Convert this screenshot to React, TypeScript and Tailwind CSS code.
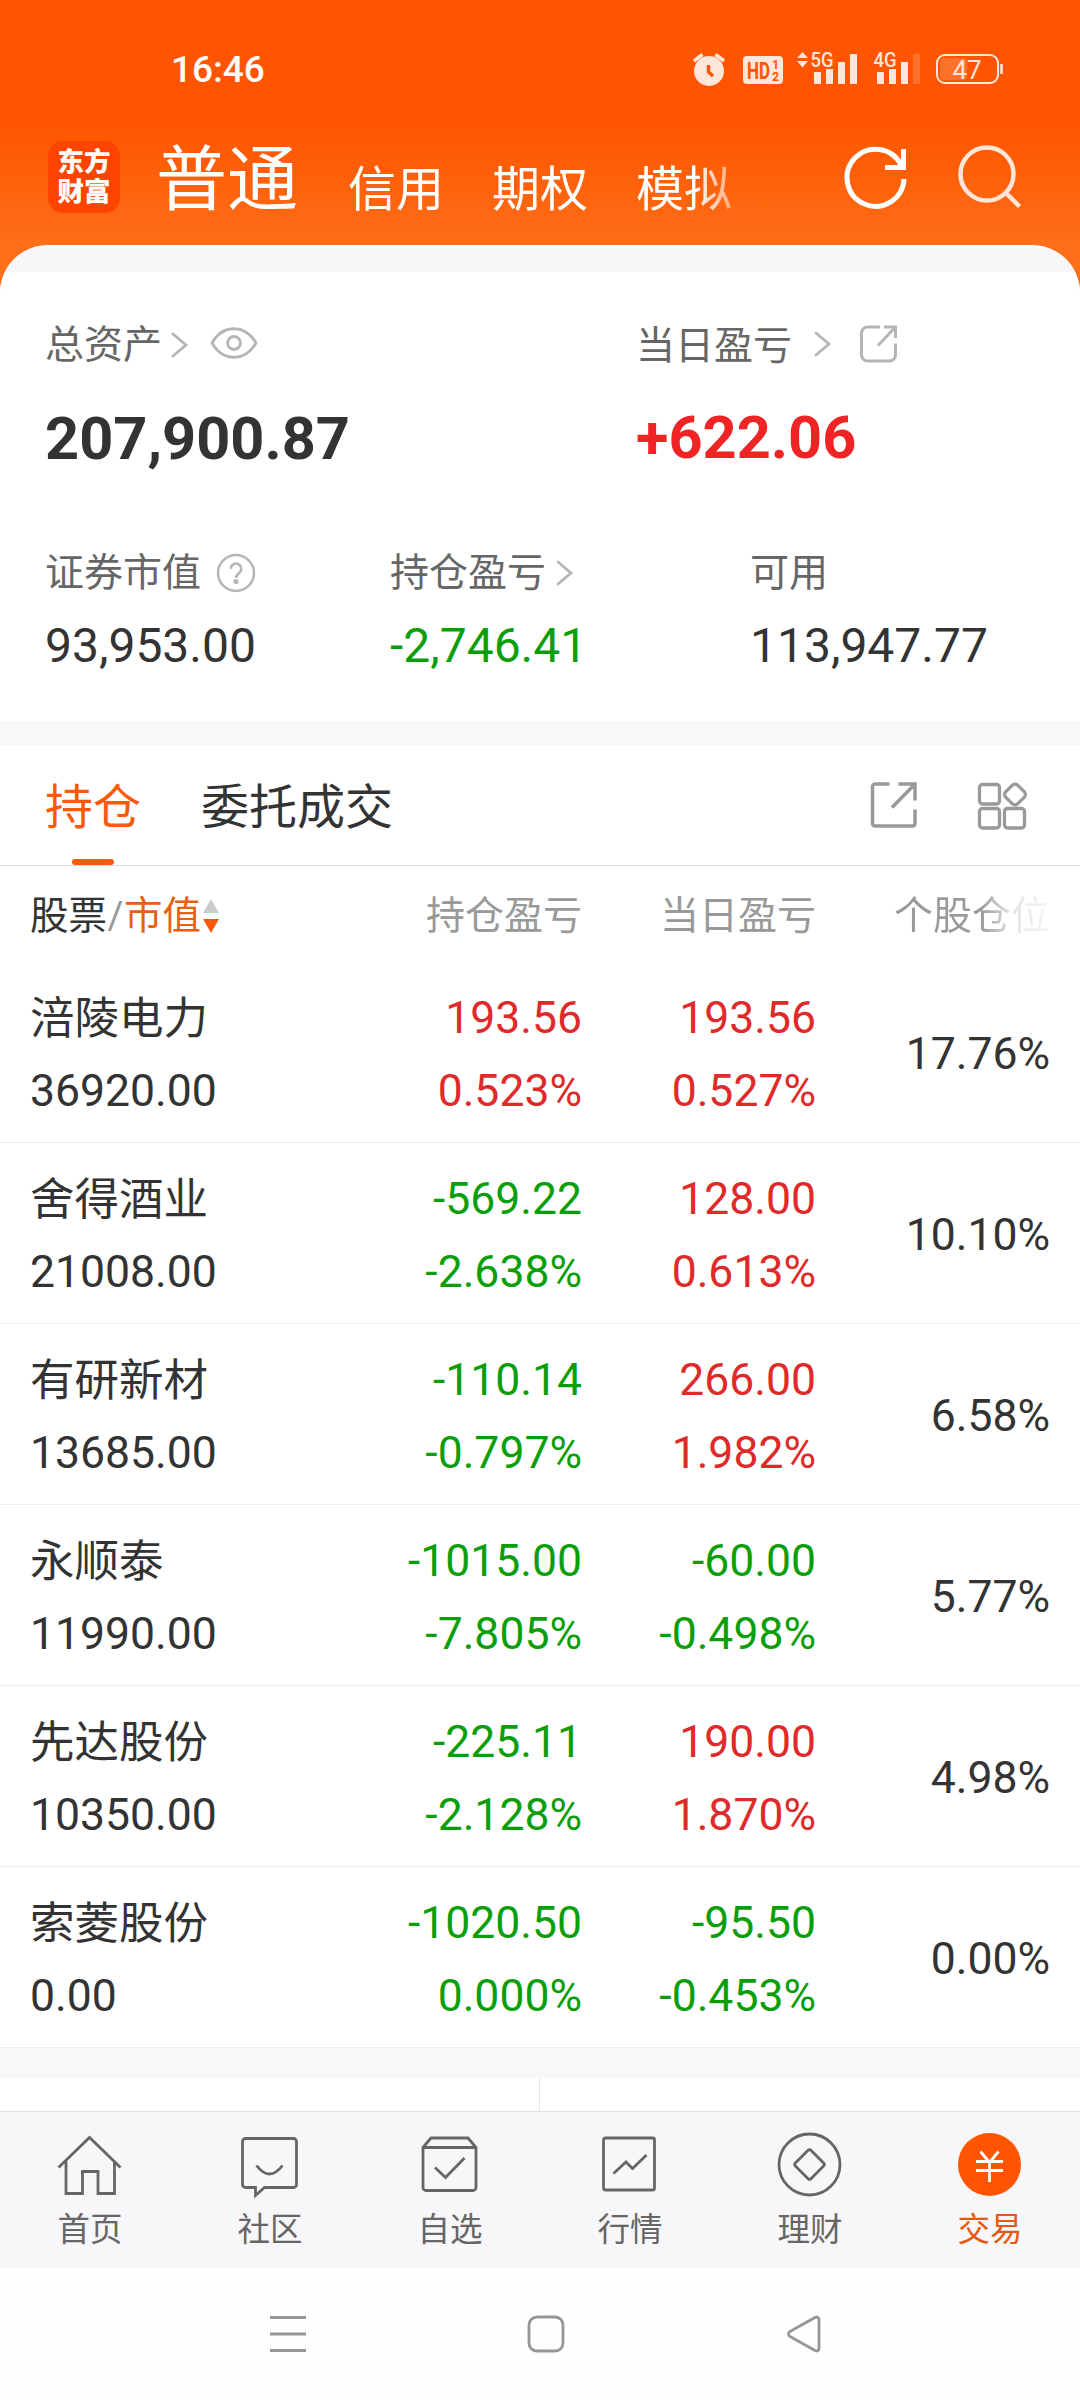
import React from 'react';

interface Holding {
  name: string;
  value: string;
  profit: string;
  profitRate: string;
  today: string;
  todayRate: string;
  position: string;
}

const holdings: Holding[] = [
  { name: '涪陵电力', value: '36920.00', profit: '193.56', profitRate: '0.523%', today: '193.56', todayRate: '0.527%', position: '17.76%' },
  { name: '舍得酒业', value: '21008.00', profit: '-569.22', profitRate: '-2.638%', today: '128.00', todayRate: '0.613%', position: '10.10%' },
  { name: '有研新材', value: '13685.00', profit: '-110.14', profitRate: '-0.797%', today: '266.00', todayRate: '1.982%', position: '6.58%' },
  { name: '永顺泰', value: '11990.00', profit: '-1015.00', profitRate: '-7.805%', today: '-60.00', todayRate: '-0.498%', position: '5.77%' },
  { name: '先达股份', value: '10350.00', profit: '-225.11', profitRate: '-2.128%', today: '190.00', todayRate: '1.870%', position: '4.98%' },
  { name: '索菱股份', value: '0.00', profit: '-1020.50', profitRate: '0.000%', today: '-95.50', todayRate: '-0.453%', position: '0.00%' },
];

const toneOf = (amount: string) => (amount.startsWith('-') ? 'text-[#0a9f0a]' : 'text-[#e02a2a]');

const Chevron = () => (
  <svg width="18" height="26" viewBox="0 0 18 26" fill="none" stroke="#b5b5b5" strokeWidth="2.8" strokeLinecap="round">
    <path d="M2 2l13 11L2 24" />
  </svg>
);

const StatusBar = () => (
  <div className="flex h-[126px] items-start">
    <div className="ml-[171px] mt-[48px] w-[522px] text-[37px] font-medium leading-[44px]">16:46</div>
    <div className="mt-[50px] flex text-[#ffe6da]">
      <svg width="34" height="38" viewBox="693 50 34 38">
        <circle cx="709" cy="71" r="15" fill="currentColor" />
        <path d="M694 61l8.500-6.500M724 61l-8.500-6.500" stroke="currentColor" strokeWidth="3.500" />
        <path d="M708.500 65v7l4.500 4" stroke="#ff5500" strokeWidth="3.500" fill="none" />
      </svg>
      <svg className="-mt-2 ml-4" width="40" height="46" viewBox="743 42 40 46" fill="#ff5500" fontWeight="700">
        <rect x="743" y="56" width="40" height="28" rx="4" fill="currentColor" />
        <text x="747" y="78.500" fontSize="23" textLength="23" lengthAdjust="spacingAndGlyphs">HD</text>
        <text x="772" y="69" fontSize="12.500">1</text>
        <text x="772" y="80.500" fontSize="12.500">2</text>
      </svg>
      <svg className="-mt-2 ml-[14px]" width="62" height="46" viewBox="797 42 62 46" fill="currentColor">
        <path d="M797 58l5.500-6 5.500 6zM797 61l5.500 6.500 5.500-6.500z" />
        <text x="810.500" y="67" fontSize="21" fontWeight="500" textLength="23" lengthAdjust="spacingAndGlyphs">5G</text>
        <path d="M814 72h7v12h-7zM826 69h7v15h-7zM838 62h7v22h-7zM850 54h7v30h-7z" />
      </svg>
      <svg className="-mt-2 ml-[14px]" width="50" height="46" viewBox="873 42 50 46" fill="currentColor">
        <text x="873.500" y="67" fontSize="21" fontWeight="500" textLength="23" lengthAdjust="spacingAndGlyphs">4G</text>
        <path d="M877 72h7v12h-7zM889 69h7v15h-7zM901 62h7v22h-7z" />
        <path d="M913 54h7v30h-7z" opacity=".2" />
      </svg>
      <svg className="ml-3" width="70" height="38" viewBox="935 50 70 38">
        <rect x="940" y="58" width="27" height="22" rx="4" fill="currentColor" opacity=".2" />
        <rect x="937" y="55" width="61" height="28" rx="8" fill="none" stroke="currentColor" strokeWidth="2" />
        <path d="M1001.500 64v10" stroke="currentColor" strokeWidth="2.500" />
        <text x="967" y="78.500" fontSize="26" textAnchor="middle" fill="currentColor">47</text>
      </svg>
    </div>
  </div>
);

const TopTabs = () => (
  <div className="flex h-[167px] items-start">
    <div className="ml-12 mt-[15px] flex h-[72px] w-[72px] flex-col items-center justify-center rounded-[15px] bg-[#ff4400] pb-px text-[26.500px] font-black leading-[30px]">
      <span>东方</span>
      <span>财富</span>
    </div>
    <div className="ml-[36px] flex w-[622px] [mask-image:linear-gradient(to_right,#000_538px,transparent_606px)]">
      <span className="mt-[2px] text-[71px] leading-[104px]">普通</span>
      <span className="ml-[50px] mt-7 text-5xl leading-[72px]">信用</span>
      <span className="ml-12 mt-7 text-5xl leading-[72px]">期权</span>
      <span className="ml-12 mt-7 text-5xl leading-[72px]">模拟</span>
    </div>
    <svg className="ml-[62px] mt-[14px]" width="70" height="75" viewBox="840 140 70 75" fill="none" stroke="#fff" strokeWidth="5">
      <path d="M904 179A28.500 28.500 0 1 1 901 165" />
      <path d="M903.500 149v18.500H885" />
    </svg>
    <svg className="ml-[43px] mt-[14px]" width="70" height="75" viewBox="953 140 70 75" fill="none" stroke="#ffe6d8" strokeWidth="4.500">
      <circle cx="987" cy="174" r="26.500" />
      <path d="M1006 193l13.500 13.500" />
    </svg>
  </div>
);

const Summary = () => (
  <div className="h-[449px] bg-white text-[#666]">
    <div className="flex h-[228px] pl-[45px] pt-[46px]">
      <div className="w-[591px]">
        <div className="flex h-[52px] items-center text-[39px]">
          <span className="mt-0.5">总资产</span>
          <span className="ml-[9px] mt-0.5"><Chevron /></span>
          <svg className="ml-[21px] -mt-0.5" width="48" height="34" viewBox="0 0 48 34" fill="none" stroke="#b5b5b5" strokeWidth="2.800">
            <path d="M2 17C13-2 35-2 46 17C35 36 13 36 2 17z" strokeLinejoin="round" />
            <circle cx="24" cy="17" r="6.500" />
          </svg>
        </div>
        <div className="mt-[33px] text-[59.500px] font-bold leading-[72px] text-[#333]">207,900.87</div>
      </div>
      <div>
        <div className="flex h-[52px] items-center text-[39px]">
          <span className="mt-1">当日盈亏</span>
          <span className="-mt-px ml-[22px]"><Chevron /></span>
          <svg className="-mt-px ml-[26px]" width="42" height="42" viewBox="0 0 42 42" fill="none" stroke="#b5b5b5" strokeWidth="3">
            <path d="M22 4H9.500a6 6 0 0 0-6 6v22a6 6 0 0 0 6 6h22a6 6 0 0 0 6-6V20.500" />
            <path d="M26 4h11.500v11M37 4.500L20 22.500" />
          </svg>
        </div>
        <div className="mt-[32px] text-[59.500px] font-bold leading-[72px] text-[#f02424]">+622.06</div>
      </div>
    </div>
    <div className="flex pl-[45px] pt-[47px]">
      <div className="w-[345px]">
        <div className="flex h-[52px] items-center text-[39px]">
          <span>证券市值</span>
          <svg className="ml-[15px]" width="40" height="40" viewBox="0 0 40 40" fill="none" stroke="#b5b5b5" strokeWidth="2.500">
            <circle cx="20" cy="20" r="18" />
            <path d="M14.800 15.800a5.200 5.200 0 1 1 8.500 4c-2.200 1.700-3.300 2.500-3.300 5.200" />
            <circle cx="20" cy="28.500" r="1.300" fill="#b5b5b5" />
          </svg>
        </div>
        <div className="mt-[19px] text-5xl leading-[56px] text-[#333]">93,953.00</div>
      </div>
      <div className="w-[360px]">
        <div className="flex h-[52px] items-center text-[39px]">
          <span>持仓盈亏</span>
          <span className="ml-[10px]"><Chevron /></span>
        </div>
        <div className="mt-[19px] text-5xl leading-[56px] text-[#0a9f0a]">-2,746.41</div>
      </div>
      <div>
        <div className="flex h-[52px] items-center text-[39px]">可用</div>
        <div className="mt-[19px] text-5xl leading-[56px] text-[#333]">113,947.77</div>
      </div>
    </div>
  </div>
);

const SectionTabs = () => (
  <div className="flex h-[121px] border-b border-[#dcdcdc] pl-[45px] text-5xl text-[#333]">
    <div className="flex flex-col items-center text-[#f95a0a]">
      <span className="mt-[27px] h-[72px] leading-[72px]">持仓</span>
      <span className="mt-[15px] h-[6px] w-[42px] rounded-full bg-[#f95a0a]" />
    </div>
    <span className="ml-[60px] mt-[27px] leading-[72px]">委托成交</span>
    <svg className="ml-[475px] mt-[34px]" width="52" height="52" viewBox="868 779 52 52" fill="none" stroke="#999" strokeWidth="3.500">
      <path d="M889.500 784H875a2.500 2.500 0 0 0-2.500 2.500v37a2.500 2.500 0 0 0 2.500 2.500h37.500a2.500 2.500 0 0 0 2.500-2.500V809.500" />
      <path d="M898.500 784H915V800.500M914.500 784.500l-22.500 23" />
    </svg>
    <svg className="ml-[55px] mt-[34px]" width="54" height="52" viewBox="975 779 54 52" fill="none" stroke="#999" strokeWidth="3.300">
      <rect x="979.500" y="784.500" width="20" height="19.500" rx="3" />
      <rect x="979.500" y="808.500" width="20" height="19.500" rx="3" />
      <rect x="1004.500" y="808.500" width="20" height="19.500" rx="3" />
      <rect x="1006.500" y="786" width="17" height="17" rx="4" transform="rotate(45 1015 794.500)" />
    </svg>
  </div>
);

const HoldingsTable = () => (
  <div className="text-[#333]">
    <div className="grid h-24 grid-cols-[282px_270px_234px_234px] pl-[30px] pt-[22px] text-[39px] leading-[56px] text-[#999]">
      <div className="flex text-[38.500px]">
        <span className="text-[#333]">股票</span>
        <span className="w-[17px] text-center">/</span>
        <span className="text-[#e8600f]">市值</span>
        <svg className="ml-[2px] mt-[11px]" width="16" height="36" viewBox="0 0 16 36">
          <path d="M8 0l8 14H0z" fill="#ccc" />
          <path d="M8 34l8-14H0z" fill="#f95a0a" />
        </svg>
      </div>
      <div className="text-right">持仓盈亏</div>
      <div className="text-right">当日盈亏</div>
      <div className="bg-[linear-gradient(to_right,#999_165px,#e4e4e4_195px,#f2f2f2_225px)] bg-clip-text text-right text-transparent">个股仓位</div>
    </div>
    {holdings.map((row) => (
      <div key={row.name} className="grid h-[181px] grid-cols-[282px_270px_234px_234px] border-b border-[#ebedf0] pl-[30px] text-[44.500px]">
        <div className="pt-5 leading-[73px]">
          <div className="mt-px h-[72px]">{row.name}</div>
          <div>{row.value}</div>
        </div>
        <div className={`pt-5 text-right leading-[73px] ${toneOf(row.profit)}`}>
          <div>{row.profit}</div>
          <div>{row.profitRate}</div>
        </div>
        <div className={`pt-5 text-right leading-[73px] ${toneOf(row.today)}`}>
          <div>{row.today}</div>
          <div>{row.todayRate}</div>
        </div>
        <div className="flex items-center justify-end pt-1">{row.position}</div>
      </div>
    ))}
  </div>
);

const navItems = [
  {
    label: '首页',
    icon: <path d="M2 34L33 4l31 30M9.500 28v32h16.500V38h15.500v22H58V28" />,
  },
  {
    label: '社区',
    icon: (
      <>
        <path d="M9 5h48a3 3 0 0 1 3 3v43a3 3 0 0 1-3 3H28l-9 8v-8H9a3 3 0 0 1-3-3V8a3 3 0 0 1 3-3z" />
        <path d="M20 32q13 17 26 0" />
      </>
    ),
  },
  {
    label: '自选',
    icon: (
      <>
        <path d="M6.500 14l8-9.500h37l8 9.500v40a3 3 0 0 1-3 3h-47a3 3 0 0 1-3-3zM6.500 14h53" />
        <path d="M18.500 34L29 44l19-19.500" />
      </>
    ),
  },
  {
    label: '行情',
    icon: (
      <>
        <rect x="7" y="4.500" width="51" height="52" rx="2" />
        <path d="M17 40l12.500-11.500 6.500 6.500 14-13.500" />
      </>
    ),
  },
  {
    label: '理财',
    icon: (
      <>
        <circle cx="33" cy="31" r="30.500" />
        <rect x="22" y="20" width="22" height="22" rx="2" transform="rotate(45 33 31)" />
      </>
    ),
  },
  {
    label: '交易',
    icon: (
      <>
        <circle cx="33" cy="31" r="31.500" fill="#ff5500" stroke="none" />
        <path d="M24 18l9 11 9-11M19.500 28h27M19.500 37h27M33 28v20.500" stroke="#fff" />
      </>
    ),
  },
];

const BottomNav = () => (
  <div className="grid h-[157px] grid-cols-6 border-t border-[#dfe0e2] bg-[#f7f7fa] pt-[22px] text-[#666]">
    {navItems.map((item) => (
      <div key={item.label} className="flex flex-col items-center">
        <svg width="66" height="64" viewBox="0.500 0.500 66 64" fill="none" stroke="currentColor" strokeWidth="2.800" className="overflow-visible">
          {item.icon}
        </svg>
        <span className={`mt-2 text-[32.500px] leading-[48px] ${item.label === '交易' ? 'text-[#e55a10]' : ''}`}>{item.label}</span>
      </div>
    ))}
  </div>
);

const SystemBar = () => (
  <div className="flex h-[132px] justify-between bg-[#fefefe] pl-[268px] pr-[255px] pt-[46px]">
    <svg width="40" height="40" viewBox="0 0 40 40" stroke="#969696" strokeWidth="3">
      <path d="M2 3.500h36M2 20h36M2 36.500h36" />
    </svg>
    <svg width="40" height="40" viewBox="1 0 40 40" fill="none" stroke="#969696" strokeWidth="2.800">
      <rect x="3" y="3" width="34" height="34" rx="8" />
    </svg>
    <svg width="40" height="40" viewBox="0 0 40 40" fill="none" stroke="#969696" strokeWidth="2.800">
      <path d="M30 3.500L5 17.500a2.800 2.800 0 0 0 0 5L30 36.500a2.500 2.500 0 0 0 4-2V5.500a2.500 2.500 0 0 0-4-2z" />
    </svg>
  </div>
);

const App: React.FC = () => {
  return (
    <div className="h-[2400px] w-[1080px] overflow-hidden bg-white font-['Roboto','Noto_Sans_CJK_SC',sans-serif]">
      <div className="h-[293px] bg-[linear-gradient(#ff5500_125px,#ff6e18_245px)] text-white">
        <StatusBar />
        <TopTabs />
      </div>
      <div className="relative -mt-12 overflow-hidden rounded-t-[48px] bg-white pt-[3px]">
        <div className="h-6 bg-[#f7f7fa]" />
        <Summary />
      </div>
      <div className="h-6 bg-[#f7f8fa]" />
      <SectionTabs />
      <HoldingsTable />
      <div className="h-[30px] bg-[#f7f8fa]" />
      <div className="flex h-[33px]">
        <div className="w-[540px] border-r border-[#e6e8ea]" />
      </div>
      <BottomNav />
      <SystemBar />
    </div>
  );
};

export default App;
